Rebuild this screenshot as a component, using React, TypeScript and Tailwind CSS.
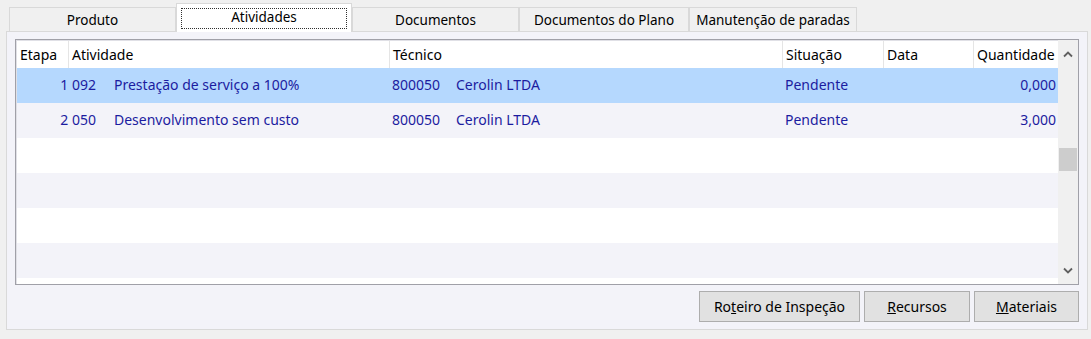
import React from "react";

const cols = [
  { label: "Etapa", w: 52 },
  { label: "Atividade", w: 321 },
  { label: "Técnico", w: 393 },
  { label: "Situação", w: 101 },
  { label: "Data", w: 90 },
  { label: "Quantidade", w: 84 },
];

const rows = [
  { etapa: "1 092", atividade: "Prestação de serviço a 100%", cod: "800050", nome: "Cerolin LTDA", sit: "Pendente", qtd: "0,000", sel: true },
  { etapa: "2 050", atividade: "Desenvolvimento sem custo", cod: "800050", nome: "Cerolin LTDA", sit: "Pendente", qtd: "3,000", sel: false },
];

function Tab({ label, w, active }: { label: string; w: number; active?: boolean }) {
  if (active) {
    return (
      <div
        className="relative z-10 -mb-px flex h-[29px] shrink-0 items-start justify-center border border-b-0 border-[#d9d9d9] bg-white px-[4px] pt-[4px]"
        style={{ width: w }}
      >
        <div className="flex h-[21px] w-full items-center justify-center border border-dotted border-[#303030] pb-[3px]">
          {label}
        </div>
      </div>
    );
  }
  return (
    <div
      className="flex h-[24px] shrink-0 items-center justify-center border border-b-0 border-[#d9d9d9] bg-[#f0f0f0] pt-[1px]"
      style={{ width: w }}
    >
      {label}
    </div>
  );
}

export default function App() {
  return (
    <div
      className="h-[339px] w-[1091px] overflow-hidden bg-[#f0f0f0] text-[13.5px] text-black"
      style={{ fontFamily: '"Noto Sans", "Open Sans", sans-serif' }}
    >
      <div className="flex h-[31px] items-end pl-[9px] pt-[2px]">
        <Tab label="Produto" w={167} />
        <Tab label="Atividades" w={176} active />
        <Tab label="Documentos" w={167} />
        <Tab label="Documentos do Plano" w={170} />
        <Tab label="Manutenção de paradas" w={168} />
      </div>
      <div className="ml-[6px] mr-[3px] flex h-[299px] flex-col border border-[#d9d9d9] bg-[#f3f3f9] pl-[8px] pr-[8px] pt-[7px]">
        <div className="flex h-[246px] border border-[#a0a0a8] bg-white text-[14px] shadow-[inset_1px_1px_0_#e0e0e6]">
          <div className="flex min-w-0 flex-1 flex-col pl-px pt-px">
            <div className="flex h-[27px] shrink-0 bg-white">
              {cols.map((c, i) => (
                <div
                  key={c.label}
                  className={`flex shrink-0 items-center pb-px pl-[3px] ${i < cols.length - 1 ? "border-r border-[#e5e5e5]" : ""}`}
                  style={{ width: c.w }}
                >
                  {c.label}
                </div>
              ))}
            </div>
            {rows.map((r) => (
              <div
                key={r.etapa}
                className={`flex h-[35px] shrink-0 items-center pb-[2px] text-[#1c1ca0] ${r.sel ? "bg-[#b5d8fe]" : "bg-[#f3f3f9]"}`}
              >
                <div className="w-[79px] shrink-0 text-right">{r.etapa}</div>
                <div className="w-[294px] shrink-0 pl-[18px]">{r.atividade}</div>
                <div className="flex w-[393px] shrink-0 pl-[2px]">
                  <span className="w-[64px]">{r.cod}</span>
                  <span>{r.nome}</span>
                </div>
                <div className="w-[101px] shrink-0 pl-[2px]">{r.sit}</div>
                <div className="w-[90px] shrink-0" />
                <div className="w-[84px] shrink-0 pr-[2px] text-right">{r.qtd}</div>
              </div>
            ))}
            <div className="h-[35px] shrink-0 bg-white" />
            <div className="h-[35px] shrink-0 bg-[#f3f3f9]" />
            <div className="h-[35px] shrink-0 bg-white" />
            <div className="h-[35px] shrink-0 bg-[#f3f3f9]" />
          </div>
          <div className="flex w-[20px] shrink-0 flex-col items-center bg-[#f0f0f0]">
            <div className="flex h-[28px] w-full items-center justify-center">
              <svg width="10" height="7" viewBox="0 0 10 7">
                <path d="M1 5.5 L5 1.5 L9 5.5" fill="none" stroke="#606060" strokeWidth="1.8" />
              </svg>
            </div>
            <div className="mt-[80px] h-[23px] w-[18px] bg-[#cdcdcd]" />
            <div className="flex-1" />
            <div className="flex h-[28px] w-full items-center justify-center">
              <svg width="10" height="7" viewBox="0 0 10 7">
                <path d="M1 1.5 L5 5.5 L9 1.5" fill="none" stroke="#606060" strokeWidth="1.8" />
              </svg>
            </div>
          </div>
        </div>
        <div className="mt-[6px] flex justify-end gap-[4px] text-[14px]">
          <button className="h-[31px] w-[161px] border border-[#adadad] bg-[#e1e1e1]">
            Ro<span className="underline">t</span>eiro de Inspeção
          </button>
          <button className="h-[31px] w-[106px] border border-[#adadad] bg-[#e1e1e1]">
            <span className="underline">R</span>ecursos
          </button>
          <button className="h-[31px] w-[105px] border border-[#adadad] bg-[#e1e1e1]">
            <span className="underline">M</span>ateriais
          </button>
        </div>
      </div>
    </div>
  );
}
